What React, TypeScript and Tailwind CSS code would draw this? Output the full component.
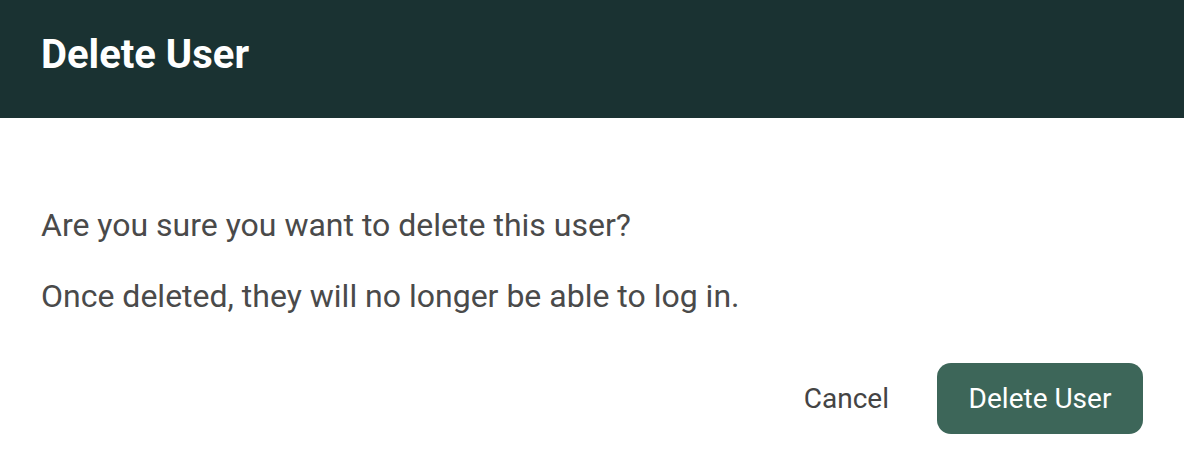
export default function App() {
  return (
    <div className="w-[1184px] h-[472px] bg-white" style={{ fontFamily: "Roboto, 'Liberation Sans', sans-serif" }}>
      <div className="h-[118px] bg-[#1a3232] flex items-center px-[41px]">
        <h1 className="text-white text-[40px] font-bold leading-none pb-[8px]">Delete User</h1>
      </div>
      <div className="px-[41px] pt-[87px] text-[#4a4a4a] text-[32px] leading-[40px]">
        <p>Are you sure you want to delete this user?</p>
        <p className="mt-[31px]">Once deleted, they will no longer be able to log in.</p>
      </div>
      <div className="flex justify-end items-center gap-[48px] pr-[41px] mt-[47px]">
        <button className="text-[28px] text-[#444]">Cancel</button>
        <button className="h-[71px] w-[206px] rounded-[14px] bg-[#3d6659] text-white text-[28px]">Delete User</button>
      </div>
    </div>
  );
}
